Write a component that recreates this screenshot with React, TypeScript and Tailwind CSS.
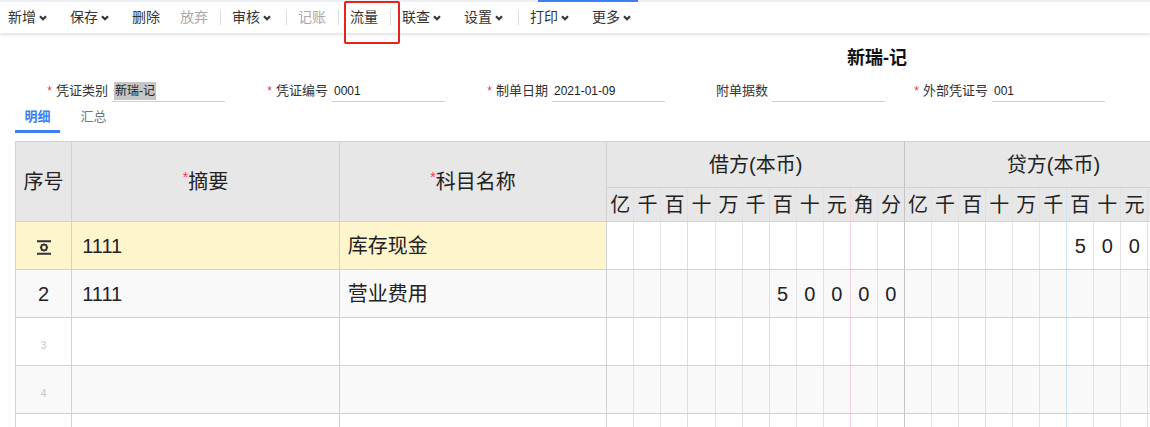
import type { ReactNode } from 'react';

type Tool = { t: string; dd?: boolean; off?: boolean } | 'sep';

const tools: Tool[] = [
  { t: '新增', dd: true },
  { t: '保存', dd: true },
  { t: '删除' },
  { t: '放弃', off: true },
  'sep',
  { t: '审核', dd: true },
  'sep',
  { t: '记账', off: true },
  'sep',
  { t: '流量' },
  'sep',
  { t: '联查', dd: true },
  { t: '设置', dd: true },
  'sep',
  { t: '打印', dd: true },
  { t: '更多', dd: true },
];

const digits = ['亿', '千', '百', '十', '万', '千', '百', '十', '元', '角', '分'];

// line colour on the right of each money cell
const lineAfter = (i: number) =>
  i === 2 || i === 5
    ? 'border-r-[#cfe3f5]'
    : i === 8
      ? 'border-r-[#f5d3d8]'
      : i === 10
        ? 'border-r-[#c4c4c4]'
        : 'border-r-[#e2e2e2]';

function Chevron() {
  return (
    <svg viewBox="0 0 8 6" className="ml-[3px] mr-[3px] w-[8px] h-[6px]">
      <path d="M1 1.2l3 3 3-3" fill="none" stroke="#333" strokeWidth="2.2" />
    </svg>
  );
}

function Field({ label, value, star, selected }: { label: string; value?: string; star?: boolean; selected?: boolean }) {
  return (
    <div className="flex items-center">
      <div className="w-[107px] pr-[4px] flex justify-end items-center text-[13px] text-[#333]">
        {star && <span className="text-[#f0364e] mr-[4px] text-[12px]">*</span>}
        {label}
      </div>
      <div className="w-[113px] h-[22px] border-b border-[#cfcfcf] pl-[2px] flex items-center text-[12px] text-[#222]">
        {value && <span className={selected ? 'bg-[#c6c6c6] px-[1px]' : ''}>{value}</span>}
      </div>
    </div>
  );
}

function Money({ values, bg }: { values: Record<number, string>; bg: string }) {
  return (
    <>
      {digits.map((_, i) => (
        <td key={i} className={`border-r border-b border-b-[#d2d2d2] ${lineAfter(i)} ${bg} text-center`}>
          {values[i] ?? ''}
        </td>
      ))}
    </>
  );
}

function Row({ no, a, b, debit, credit, bg, moneyBg }: { no: ReactNode; a?: string; b?: string; debit?: Record<number, string>; credit?: Record<number, string>; bg: string; moneyBg: string }) {
  return (
    <tr className="h-[48px] text-[20px] text-[#222]">
      <td className={`border border-[#d2d2d2] text-center ${bg}`}>{no}</td>
      <td className={`border border-[#d2d2d2] pl-[10px] ${bg}`}>{a}</td>
      <td className={`border border-[#d2d2d2] pl-[8px] ${bg}`}>{b}</td>
      <Money values={debit ?? {}} bg={moneyBg} />
      <Money values={credit ?? {}} bg={moneyBg} />
    </tr>
  );
}

function InsertIcon() {
  return (
    <svg viewBox="0 0 14 15" className="w-[14px] h-[15px] inline-block">
      <path d="M0 1.2h14M0 13.8h14" stroke="#333" strokeWidth="2" />
      <circle cx="7" cy="7.5" r="2.8" fill="none" stroke="#333" strokeWidth="1.8" />
      <path d="M7 3.4v1.4M7 10.2v1.4M2.9 7.5h1.4M9.7 7.5h1.4M4.1 4.6l1 1M8.9 9.4l1 1M4.1 10.4l1-1M8.9 5.6l1-1" stroke="#333" strokeWidth="1.4" />
    </svg>
  );
}

export default function App() {
  return (
    <div className="relative w-[1150px] h-[427px] overflow-hidden bg-white font-['Liberation_Sans','Noto_Sans_CJK_SC',sans-serif]">
      {/* top strip */}
      <div className="flex h-[2px] bg-[#eceff4]">
        <div className="w-[538px]" />
        <div className="w-[100px] bg-[#3b7ff2]" />
      </div>

      {/* toolbar */}
      <div className="h-[31px] bg-white shadow-[0_2px_3px_rgba(0,0,0,0.12)] flex items-center">
        <div className="flex items-center -ml-[2px] text-[14px]">
          {tools.map((tool, i) =>
            tool === 'sep' ? (
              <span key={i} className="w-px h-[15px] bg-[#d9dde3] ml-[2px] mr-[1px]" />
            ) : (
              <button key={i} className={`flex items-center px-[10px] ${tool.off ? 'text-[#aaa]' : 'text-[#333]'}`}>
                {tool.t}
                {tool.dd && <Chevron />}
              </button>
            ),
          )}
        </div>
      </div>

      {/* annotation box around 流量 */}
      <div className="absolute left-[344px] top-[1px] w-[56px] h-[43px] border-2 border-[#e8231d] rounded-[2px]" />

      {/* title */}
      <div className="mt-[13px] pl-[847px] h-[24px] leading-[24px] text-[18px] font-bold text-[#111]">新瑞-记</div>

      {/* form row */}
      <div className="mt-[10px] flex pl-[5px]">
        <Field star label="凭证类别" value="新瑞-记" selected />
        <Field star label="凭证编号" value="0001" />
        <Field star label="制单日期" value="2021-01-09" />
        <Field label="附单据数" />
        <Field star label="外部凭证号" value="001" />
      </div>

      {/* tabs */}
      <div className="mt-[4px] ml-[15px] flex gap-[11px] text-[13px]">
        <div className="w-[45px] flex flex-col items-center pt-[1px]">
          <span className="leading-[20px] text-[#3b7ff2] font-bold">明细</span>
          <span className="mt-[3px] h-[3px] w-full bg-[#3b7ff2]" />
        </div>
        <div className="w-[45px] flex flex-col items-center pt-[1px]">
          <span className="leading-[20px] text-[#777]">汇总</span>
        </div>
      </div>

      {/* voucher table */}
      <div className="mt-[8px] ml-[15px]">
        <table className="table-fixed border-collapse w-[1188px]">
          <colgroup>
            <col className="w-[56px]" />
            <col className="w-[267px]" />
            <col className="w-[267px]" />
            {digits.map((_, i) => (
              <col key={`d${i}`} className="w-[27px]" />
            ))}
            {digits.map((_, i) => (
              <col key={`c${i}`} className="w-[27px]" />
            ))}
          </colgroup>
          <thead className="text-[20px] text-[#222] font-normal">
            <tr className="h-[46px] bg-[#e7e7e7]">
              <th rowSpan={2} className="border border-[#d2d2d2] font-normal">序号</th>
              <th rowSpan={2} className="border border-[#d2d2d2] font-normal">
                <span className="text-[#f0364e] text-[14px] align-top">*</span>摘要
              </th>
              <th rowSpan={2} className="border border-[#d2d2d2] font-normal">
                <span className="text-[#f0364e] text-[14px] align-top">*</span>科目名称
              </th>
              <th colSpan={11} className="border border-[#d2d2d2] border-r-[#c4c4c4] font-normal">借方(本币)</th>
              <th colSpan={11} className="border border-[#d2d2d2] font-normal">贷方(本币)</th>
            </tr>
            <tr className="h-[34px] bg-[#e7e7e7]">
              {[...digits, ...digits].map((d, i) => (
                <th key={i} className={`border-r border-b border-b-[#d2d2d2] ${lineAfter(i % 11)} font-normal`}>
                  {d}
                </th>
              ))}
            </tr>
          </thead>
          <tbody>
            <Row no={<InsertIcon />} a="1111" b="库存现金" credit={{ 6: '5', 7: '0', 8: '0' }} bg="bg-[#fff5cc]" moneyBg="bg-white" />
            <Row no="2" a="1111" b="营业费用" debit={{ 6: '5', 7: '0', 8: '0', 9: '0', 10: '0' }} bg="bg-[#f9f9f9]" moneyBg="bg-[#f9f9f9]" />
            <Row no={<span className="text-[10px] text-[#c4c4c4]">3</span>} bg="bg-white" moneyBg="bg-white" />
            <Row no={<span className="text-[10px] text-[#c4c4c4]">4</span>} bg="bg-[#f9f9f9]" moneyBg="bg-[#f9f9f9]" />
            <Row no="" bg="bg-white" moneyBg="bg-white" />
          </tbody>
        </table>
      </div>
    </div>
  );
}
